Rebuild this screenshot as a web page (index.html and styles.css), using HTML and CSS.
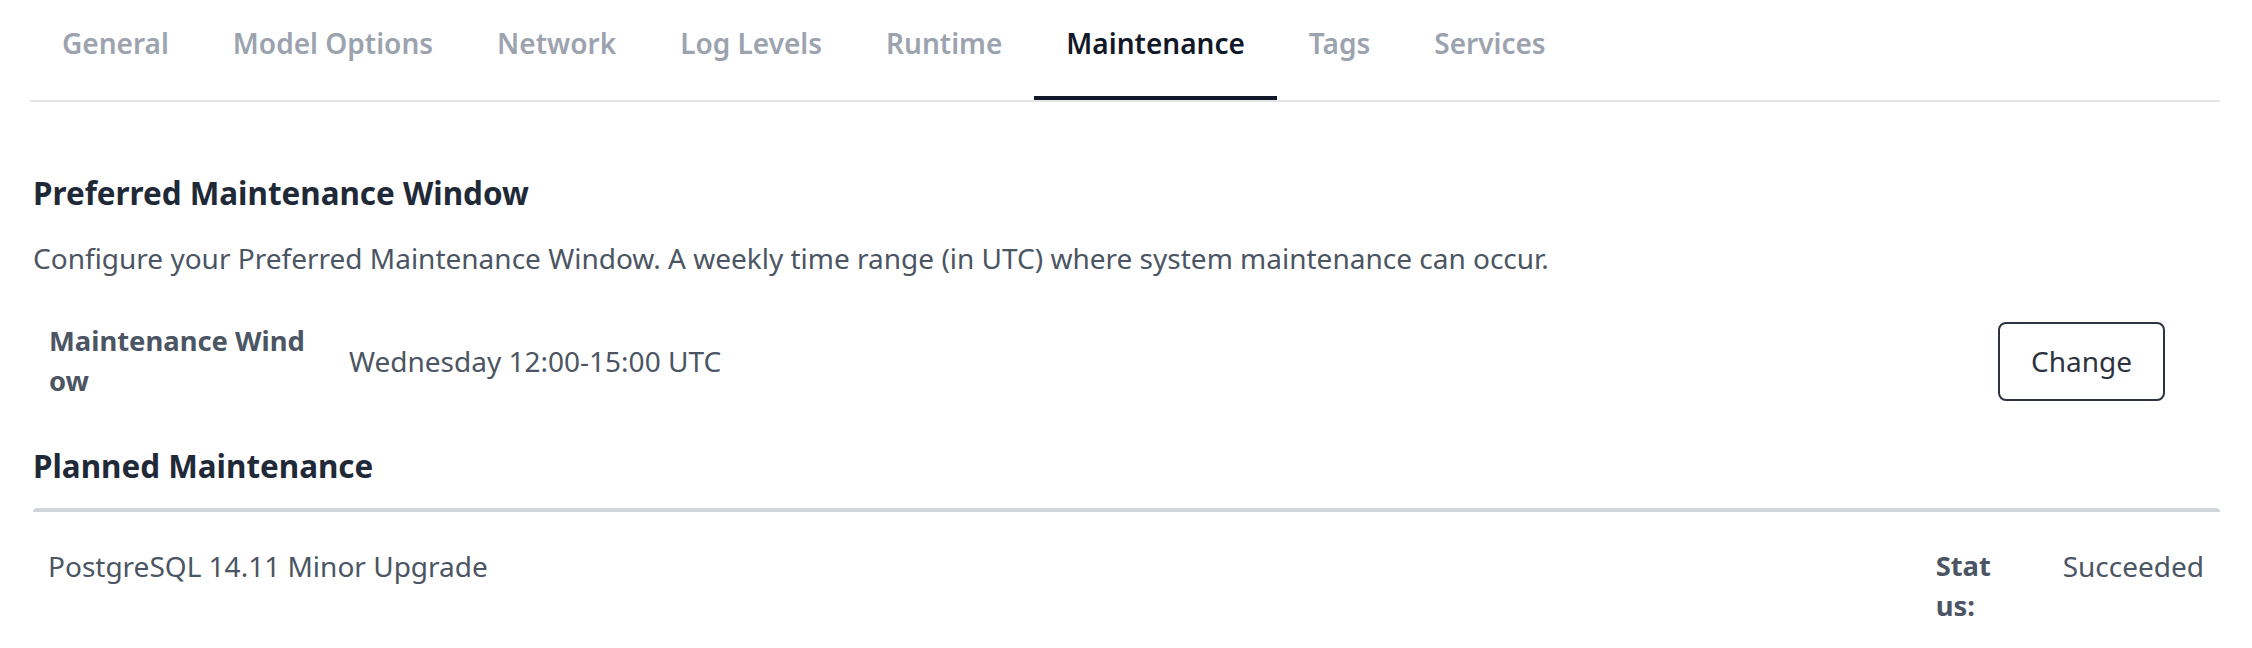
FILE: index.html
```html
<!DOCTYPE html>
<html lang="en">
<head>
<meta charset="utf-8">
<title>Maintenance</title>
<link rel="stylesheet" href="styles.css">
</head>
<body>
<div class="page">
  <nav class="tabs">
    <a class="tab">General</a>
    <a class="tab">Model Options</a>
    <a class="tab">Network</a>
    <a class="tab">Log Levels</a>
    <a class="tab">Runtime</a>
    <a class="tab active">Maintenance</a>
    <a class="tab">Tags</a>
    <a class="tab">Services</a>
  </nav>

  <section class="window-section">
    <h2 class="heading">Preferred Maintenance Window</h2>
    <p class="desc">Configure your Preferred Maintenance Window. A weekly time range (in UTC) where system maintenance can occur.</p>
    <div class="window-row">
      <div class="label">Maintenance Window</div>
      <div class="value">Wednesday 12:00-15:00 UTC</div>
      <button class="btn">Change</button>
    </div>
  </section>

  <section class="planned-section">
    <h2 class="heading">Planned Maintenance</h2>
    <div class="planned-list">
      <div class="planned-row">
        <div class="planned-name">PostgreSQL 14.11 Minor Upgrade</div>
        <div class="status-label">Status:</div>
        <div class="status-value">Succeeded</div>
      </div>
    </div>
  </section>
</div>
</body>
</html>
```

FILE: styles.css
```css
* { box-sizing: border-box; }
html, body { margin: 0; background: #ffffff; }
body {
  font-family: "Noto Sans", "Open Sans", sans-serif;
  color: #4b5563;
}
.page {
  padding: 0 32px 0 30px;
}
.tabs {
  display: flex;
  border-bottom: 2px solid #e5e5e5;
  height: 102px;
}
.tab {
  display: block;
  height: 100px;
  padding: 23px 32px 0;
  font-size: 28px;
  line-height: 40px;
  font-weight: 600;
  color: #9ca3af;
  border-bottom: 4px solid transparent;
}
.tab.active {
  color: #111827;
  border-bottom-color: #111827;
}
.window-section {
  padding: 71px 0 0 3px;
}
.heading {
  margin: 0;
  font-size: 31.4px;
  line-height: 40px;
  font-weight: 700;
  color: #1f2937;
}
.desc {
  margin: 25px 0 0;
  font-size: 28px;
  line-height: 40px;
  color: #4b5563;
}
.window-row {
  display: flex;
  align-items: center;
  margin-top: 43px;
  padding: 0 55px 0 16px;
}
.label {
  width: 262px;
  margin-right: 38px;
  font-size: 27.4px;
  line-height: 40px;
  font-weight: 700;
  word-break: break-all;
  color: #4b5563;
}
.value {
  flex: 1;
  font-size: 28px;
  line-height: 40px;
}
.btn {
  width: 167px;
  height: 79px;
  border: 2px solid #2d3340;
  border-radius: 8px;
  background: #fff;
  font-family: inherit;
  font-size: 28px;
  color: #2d3340;
}
.planned-section {
  padding: 45px 0 0 3px;
}
.planned-list {
  margin-top: 22px;
  border-top: 4px solid #d1d5db;
  border-radius: 4px;
}
.planned-row {
  display: flex;
  align-items: flex-start;
  padding: 34px 16px 0 15px;
}
.planned-name {
  flex: 1;
  font-size: 28px;
  line-height: 40px;
}
.status-label {
  width: 62px;
  margin-right: 65px;
  font-size: 27.4px;
  line-height: 40px;
  font-weight: 700;
  word-break: break-all;
}
.status-value {
  font-size: 28px;
  line-height: 40px;
}
```
